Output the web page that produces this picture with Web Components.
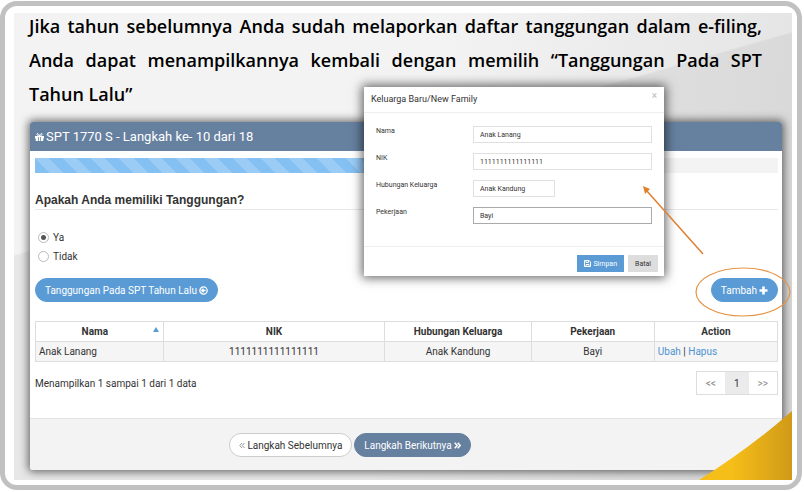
<!DOCTYPE html>
<html lang="id">
<head>
<meta charset="utf-8">
<title>SPT 1770 S</title>
<style>
  body {
    margin: 0;
    background: #fff;
    color: #333;
    font-family: Roboto, "Liberation Sans", sans-serif;
    font-size: 10px;
  }
</style>
</head>
<body>
<slide-frame>
  <slide-title>
    <span>Jika tahun sebelumnya Anda sudah melaporkan daftar tanggungan dalam e-filing,</span>
    <span>Anda dapat menampilkannya kembali dengan memilih “Tanggungan Pada SPT</span>
    <span>Tahun Lalu”</span>
  </slide-title>

  <step-card>
    <span slot="title">SPT 1770 S - Langkah ke- 10 dari 18</span>
    <step-progress value="10" max="18"></step-progress>
    <yes-no-question>Apakah Anda memiliki Tanggungan?</yes-no-question>
    <action-bar>
      <pill-button icon="circle">Tanggungan Pada SPT Tahun Lalu</pill-button>
      <pill-button icon="plus">Tambah</pill-button>
    </action-bar>
    <family-table></family-table>
    <table-footer>Menampilkan 1 sampai 1 dari 1 data</table-footer>
    <pill-button slot="footer" kind="light" icon="back">Langkah Sebelumnya</pill-button>
    <pill-button slot="footer" kind="dark" icon="next">Langkah Berikutnya</pill-button>
  </step-card>

  <family-dialog slot="over" name="Keluarga Baru/New Family"></family-dialog>
  <slide-marks slot="over"></slide-marks>
</slide-frame>

<script>
const define = (name, html, setup) => {
  const template = document.createElement('template');
  template.innerHTML = html;

  window.customElements.define(name, class extends HTMLElement {
    constructor() {
      super();

      this.attachShadow({mode: 'open'});
      this.shadowRoot.appendChild(template.content.cloneNode(true));
      if (setup) setup(this, this.shadowRoot);
    }
  });
};

const icons = {
  circle: '<svg width="9" height="9" viewBox="0 0 18 18" fill="none" stroke="currentColor" stroke-width="2.6"><circle cx="9" cy="9" r="7.3"/><path d="M13 9H6M9 5.5L5.5 9L9 12.5"/></svg>',
  plus: '<svg width="9" height="9" viewBox="0 0 9 9" fill="currentColor"><path d="M3.2 .5h2.6v2.7h2.7v2.6H5.8v2.7H3.2V5.8H.5V3.2h2.7z"/></svg>',
  back: '<svg width="6" height="7" viewBox="0 0 6 7" fill="none" stroke="#999"><path d="M3 1L.8 3.5L3 6M5.5 1L3.3 3.5L5.5 6"/></svg>',
  next: '<svg width="7" height="7" viewBox="0 0 7 7" fill="none" stroke="currentColor" stroke-width="1.5"><path d="M.7 .8L3.2 3.5L.7 6.2M3.7 .8L6.2 3.5L3.7 6.2"/></svg>',
};

define('slide-frame', `
  <style>
    :host {
      display: flex;
      box-sizing: border-box;
      min-height: calc(100vh - 3px);
      margin: 1px 2px 2px 0;
      padding: 7px 5px 5px 9px;
      border: 5px solid #c1c1c1;
      border-radius: 17px;
    }

    .slide {
      position: relative;
      flex: 1;
      overflow: hidden;
      background:
        linear-gradient(164deg, transparent 232px, rgba(0, 0, 0, .05) 234px),
        linear-gradient(100deg, #f3f3f3 50%, #e2e2e2);
    }
  </style>
  <div class="slide">
    <slot></slot>
    <slot name="over"></slot>
  </div>
`);

define('slide-title', `
  <style>
    :host {
      display: flex;
      flex-direction: column;
      gap: 8px;
      margin: 0 30px 15px 15px;
      color: #000;
      font: 600 18px/26px "Open Sans", "Noto Sans", sans-serif;
    }

    ::slotted(span) {
      white-space: nowrap;
      text-align: justify;
      text-align-last: justify;
    }

    ::slotted(span:last-child) {
      text-align-last: left;
    }
  </style>
  <slot></slot>
`);

define('step-card', `
  <style>
    :host {
      display: block;
      margin: 0 10px 10px 16px;
      background: #fff;
      border-radius: 3px;
      box-shadow: 0 0 9px 2px rgba(0, 0, 0, .55);
    }

    header {
      display: flex;
      align-items: center;
      gap: 2px;
      padding: 0 5px;
      background: #66809f;
      border-radius: 3px 3px 0 0;
      color: #fff;
      font-size: 13px;
      line-height: 29px;
    }

    .body {
      padding: 7px 4px 23px 5px;
    }

    footer {
      display: flex;
      justify-content: center;
      gap: 2px;
      padding: 14px 112px 13px 0;
      background: #f3f3f3;
      border-top: 1px solid #e3e3e3;
      border-radius: 0 0 3px 3px;
    }
  </style>
  <header>
    <svg width="9" height="8" viewBox="0 0 18 16" fill="none">
      <path d="M0 6h18v5h-1.500v5h-15v-5H0z" fill="currentColor"/>
      <path d="M9 6C7 0 3 0 4 3s3 3 5 3s4 0 5-3s-3-3-5 3z" stroke="currentColor" stroke-width="2"/>
      <path d="M7 8v8M11 8v8" stroke="#66809f" stroke-width="1.500"/>
    </svg>
    <slot name="title"></slot>
  </header>
  <div class="body"><slot></slot></div>
  <footer><slot name="footer"></slot></footer>
`);

define('step-progress', `
  <style>
    :host {
      display: block;
      background: #f3f3f3;
    }

    div {
      height: 15px;
      background: repeating-linear-gradient(45deg, #84c0f1 0 10px, #9accf6 10px 20px);
    }
  </style>
  <div></div>
`, (host, root) => {
  const share = host.getAttribute('value') / host.getAttribute('max');
  root.querySelector('div').style.width = `${Math.round(share * 100)}%`;
});

define('yes-no-question', `
  <style>
    :host {
      display: block;
      margin: 18px 0 12px;
    }

    fieldset {
      margin: 0;
      padding: 0;
      border: 0;
    }

    legend {
      box-sizing: border-box;
      width: 100%;
      margin-bottom: 18px;
      padding: 0;
      border-bottom: 1px solid #e8e8e8;
      font: 700 12px/18px "Liberation Sans", sans-serif;
    }

    label {
      display: flex;
      align-items: center;
      gap: 4px;
      padding-left: 3px;
      font-size: 10px;
      line-height: 19px;
    }

    input {
      appearance: none;
      box-sizing: border-box;
      width: 11px;
      height: 11px;
      margin: 0;
      border: 1px solid #bbb;
      border-radius: 50%;
    }

    input:checked {
      background: radial-gradient(circle, #555 0 2px, #fff 3px);
    }
  </style>
  <fieldset>
    <legend><slot></slot></legend>
    <label><input type="radio" name="owned" checked>Ya</label>
    <label><input type="radio" name="owned">Tidak</label>
  </fieldset>
`);

define('action-bar', `
  <style>
    :host {
      display: flex;
      justify-content: space-between;
      margin-bottom: 19px;
    }
  </style>
  <slot></slot>
`);

define('pill-button', `
  <style>
    :host {
      display: block;
    }

    button {
      display: flex;
      align-items: center;
      gap: 2px;
      box-sizing: border-box;
      height: 24px;
      padding: 0 9px;
      border: 1px solid #5b9bd5;
      border-radius: 12px;
      background: #5b9bd5;
      color: #fff;
      font: inherit;
      white-space: nowrap;
    }

    :host([kind=light]) button {
      background: #fff;
      border-color: #ccc;
      color: #333;
    }

    :host([kind=dark]) button {
      background: #66809f;
      border-color: #66809f;
    }
  </style>
  <button type="button"><slot></slot></button>
`, (host, root) => {
  const icon = host.getAttribute('icon');
  root.querySelector('button').insertAdjacentHTML(icon === 'back' ? 'afterbegin' : 'beforeend', icons[icon]);
});

define('family-table', `
  <style>
    :host {
      display: block;
    }

    table {
      width: 100%;
      table-layout: fixed;
      border-collapse: collapse;
    }

    th, td {
      padding: 0 3px;
      border: 1px solid #ddd;
      line-height: 19px;
      text-align: center;
    }

    th span {
      float: right;
      width: 0;
      margin: 5px 1px 0 2px;
      border: 3px solid transparent;
      border-top: 0;
      border-bottom: 5px solid #5b9bd5;
    }

    td {
      background: #f5f5f5;
    }

    td:first-child, td:last-child {
      text-align: left;
    }

    a {
      color: #4f93d0;
      text-decoration: none;
    }
  </style>
  <table>
    <colgroup>
      <col style="width: 17.2%"><col style="width: 29.9%"><col style="width: 19.7%"><col style="width: 16.6%"><col>
    </colgroup>
    <thead>
      <tr><th><span></span>Nama</th><th>NIK</th><th>Hubungan Keluarga</th><th>Pekerjaan</th><th>Action</th></tr>
    </thead>
    <tbody>
      <tr>
        <td>Anak Lanang</td><td>1111111111111111</td><td>Anak Kandung</td><td>Bayi</td>
        <td><a href="#ubah">Ubah</a> | <a href="#hapus">Hapus</a></td>
      </tr>
    </tbody>
  </table>
`);

define('table-footer', `
  <style>
    :host {
      display: flex;
      align-items: center;
      justify-content: space-between;
      margin-top: 9px;
    }

    nav {
      display: flex;
      border: 1px solid #ddd;
    }

    button {
      height: 22px;
      padding: 0 9px;
      border: 0;
      background: #fff;
      color: #888;
      font: inherit;
    }

    button[aria-current] {
      background: #ebebeb;
      color: #333;
    }
  </style>
  <slot></slot>
  <nav>
    <button type="button">&lt;&lt;</button>
    <button type="button" aria-current="page">1</button>
    <button type="button">&gt;&gt;</button>
  </nav>
`);

define('family-dialog', `
  <style>
    :host {
      position: absolute;
      top: 74px;
      right: 128px;
      width: 300px;
      background: #fff;
      box-shadow: 0 0 10px 2px rgba(0, 0, 0, .6);
      font-size: 7px;
    }

    header {
      display: flex;
      justify-content: space-between;
      padding: 0 7px;
      border-bottom: 1px solid #eee;
      line-height: 25px;
    }

    h2 {
      margin: 0;
      font-size: 9px;
      font-weight: 400;
    }

    header button {
      padding: 0;
      border: 0;
      background: none;
      color: #bbb;
      font: inherit;
      font-size: 10px;
      line-height: 18px;
      align-self: flex-start;
    }

    form {
      display: grid;
      grid-template-columns: 97px 1fr;
      row-gap: 10px;
      padding: 13px 12px 22px;
    }

    label {
      line-height: 11px;
    }

    input {
      box-sizing: border-box;
      width: 100%;
      height: 17px;
      padding: 0 6px;
      border: 1px solid #e0e0e0;
      background: #fff;
      color: #333;
      font: inherit;
      outline: 0;
    }

    #relation {
      width: 82px;
    }

    #job {
      border-color: #aaa;
    }

    footer {
      display: flex;
      justify-content: flex-end;
      gap: 4px;
      padding: 8px 6px 4px;
      border-top: 1px solid #eee;
    }

    footer button {
      display: flex;
      align-items: center;
      gap: 2px;
      height: 17px;
      padding: 0 7px;
      border: 0;
      background: #ddd;
      color: #333;
      font: inherit;
    }

    footer .save {
      background: #5b9bd5;
      color: #fff;
    }
  </style>
  <header>
    <h2></h2>
    <button type="button" aria-label="Tutup">×</button>
  </header>
  <form>
    <label for="name">Nama</label><input id="name" value="Anak Lanang">
    <label for="nik">NIK</label><input id="nik" value="1111111111111111">
    <label for="relation">Hubungan Keluarga</label><input id="relation" value="Anak Kandung">
    <label for="job">Pekerjaan</label><input id="job" value="Bayi">
  </form>
  <footer>
    <button type="button" class="save">
      <svg width="7" height="7" viewBox="0 0 14 14" fill="none" stroke="currentColor" stroke-width="2"><path d="M1 1h9l3 3v9H1zM4 1v4h5V1M4 13V9h6v4"/></svg>
      Simpan
    </button>
    <button type="button">Batal</button>
  </footer>
`, (host, root) => {
  root.querySelector('h2').innerText = host.getAttribute('name');
});

// Arrow, ring and gold corner drawn over the slide, measured from its right edge.
define('slide-marks', `
  <style>
    :host {
      position: absolute;
      top: 0;
      right: 0;
      pointer-events: none;
    }

    svg {
      display: block;
    }
  </style>
  <svg width="160" height="467" viewBox="0 0 160 467" fill="none">
    <defs>
      <linearGradient id="gold" x1="0" x2="1">
        <stop offset=".35" stop-color="#f6be18"/>
        <stop offset="1" stop-color="#d09a18"/>
      </linearGradient>
    </defs>
    <path d="M67 467Q118 435 160 398V467z" fill="url(#gold)"/>
    <path d="M71 241L14 177" stroke="#e08030" stroke-width="1.500"/>
    <path d="M11 173L18 176L13 181z" fill="#e08030"/>
    <ellipse cx="111" cy="279" rx="47" ry="24" stroke="#e39447" stroke-width="1.200"/>
  </svg>
`);
</script>
</body>
</html>
